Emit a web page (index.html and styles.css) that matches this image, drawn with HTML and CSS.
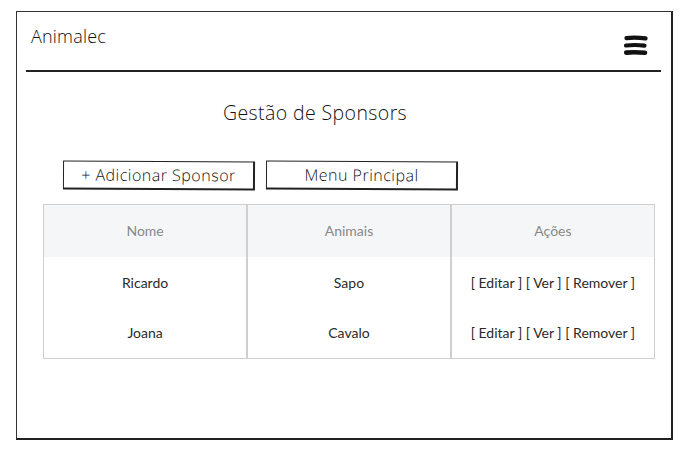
FILE: index.html
```
<!DOCTYPE html>
<html lang="pt">
<head>
<meta charset="utf-8">
<title>Animalec - Gestão de Sponsors</title>
<link rel="stylesheet" href="styles.css">
</head>
<body>
<div class="frame">
  <header class="topbar">
    <div class="brand">Animalec</div>
    <svg class="burger" width="26" height="22" viewBox="0 0 26 22" aria-hidden="true">
      <path d="M3.5 3.2 C9 2.4 16 2.6 22.5 3.4" stroke="#111" stroke-width="4.2" stroke-linecap="round" fill="none"/>
      <path d="M3 10.5 C9 9.8 16 9.9 21.5 10.6" stroke="#111" stroke-width="4.2" stroke-linecap="round" fill="none"/>
      <path d="M3.2 17.6 C9 17 16 17.2 22 17.8" stroke="#111" stroke-width="4.6" stroke-linecap="round" fill="none"/>
    </svg>
  </header>
  <div class="divider"></div>
  <h1 class="title">Gestão de Sponsors</h1>
  <div class="actions">
    <button class="sketch-btn btn-add">+ Adicionar Sponsor</button>
    <button class="sketch-btn btn-menu">Menu Principal</button>
  </div>
  <table class="grid">
    <thead>
      <tr><th>Nome</th><th>Animais</th><th>Ações</th></tr>
    </thead>
    <tbody>
      <tr><td>Ricardo</td><td>Sapo</td><td>[ Editar ] [ Ver ] [ Remover ]</td></tr>
      <tr><td>Joana</td><td>Cavalo</td><td>[ Editar ] [ Ver ] [ Remover ]</td></tr>
    </tbody>
  </table>
</div>
</body>
</html>
```

FILE: styles.css
```
* { box-sizing: border-box; }
html, body { margin: 0; padding: 0; background: #fff; }
body {
  width: 689px;
  height: 453px;
  overflow: hidden;
  font-family: "Open Sans", "DejaVu Sans", sans-serif;
  color: #111;
}
.frame {
  margin: 11px 0 0 16px;
  width: 657px;
  height: 429px;
  border-top: 1.5px solid #333;
  border-left: 1.5px solid #333;
  border-right: 2px solid #222;
  border-bottom: 2px solid #222;
  display: flex;
  flex-direction: column;
}
.topbar {
  display: flex;
  justify-content: space-between;
  align-items: flex-start;
  padding: 14px 22px 0 14px;
  height: 58px;
}
.brand {
  font-family: "Open Sans", sans-serif;
  font-weight: 300;
  font-size: 18px;
  line-height: 20px;
  letter-spacing: 0.2px;
}
.burger { margin-top: 9px; }
.divider {
  margin: 0 10px 0 9px;
  height: 2px;
  background: #222;
}
.title {
  margin: 29px 58px 0 0;
  text-align: center;
  font-family: "Open Sans", sans-serif;
  font-weight: 300;
  font-size: 19.5px;
  line-height: 24px;
  letter-spacing: 0.4px;
}
.actions {
  display: flex;
  gap: 11px;
  margin: 36px 0 0 46px;
}
.sketch-btn {
  height: 29px;
  width: 192px;
  background: #fff;
  border: 1.5px solid #222;
  border-right-width: 2px;
  border-bottom-width: 2px;
  font-family: "Open Sans", sans-serif;
  font-weight: 300;
  font-size: 16px;
  letter-spacing: 0.5px;
  color: #111;
  padding: 0;
}
.btn-add { transform: rotate(0.25deg); }
.btn-menu { transform: rotate(0.3deg); }
.grid {
  margin: 14px 0 0 26px;
  width: 612px;
  border-collapse: collapse;
  border: 1.5px solid #cfcfcf;
  font-family: "Lato", sans-serif;
  font-size: 14px;
  table-layout: fixed;
}
.grid th, .grid td {
  text-align: center;
  height: 51px;
  padding: 0;
  border-left: 2px solid #cfcfcf;
}
.grid th:first-child, .grid td:first-child { border-left: none; }
.grid th {
  background: #f5f6f8;
  font-weight: 400;
  color: #888;
  height: 52px;
}
.grid td { color: #2a2a2a; }
```
